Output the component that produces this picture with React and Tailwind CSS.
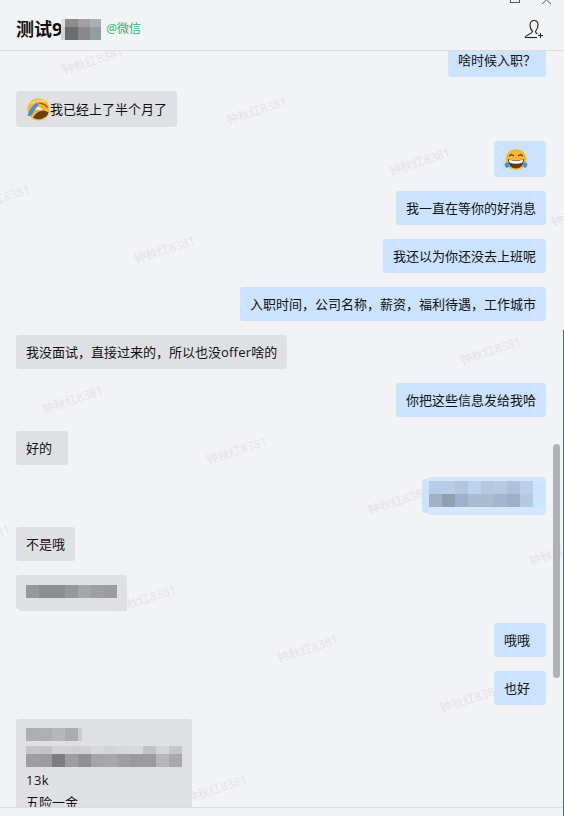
import React from 'react';

const marks = [
    'left-[61px] top-[52px]',
    'left-[225px] top-[102px]',
    'left-[388px] top-[153px]',
    'left-[-32px] top-[190px]',
    'left-[133px] top-[241px]',
    'left-[550px] top-[204px]',
    'left-[296px] top-[291px]',
    'left-[459px] top-[342px]',
    'left-[41px] top-[391px]',
    'left-[205px] top-[442px]',
    'left-[367px] top-[492px]',
    'left-[528px] top-[543px]',
    'left-[-52px] top-[530px]',
    'left-[114px] top-[590px]',
    'left-[276px] top-[640px]',
    'left-[439px] top-[690px]',
    'left-[185px] top-[780px]',
];

// pixelated patches over private text; widths/heights are per column/row
function Mosaic({ rows, widths, heights, className = '' }) {
    const xs = widths.map((_, i) => widths.slice(0, i).reduce((a, b) => a + b, 0));
    const ys = heights.map((_, i) => heights.slice(0, i).reduce((a, b) => a + b, 0));
    return (
        <svg
            width={widths.reduce((a, b) => a + b, 0)}
            height={heights.reduce((a, b) => a + b, 0)}
            className={`block shrink-0 ${className}`}
        >
            {rows.map((row, y) =>
                row.map((c, x) => (
                    <rect key={x + '-' + y} x={xs[x]} y={ys[y]} width={widths[x]} height={heights[y]} fill={c} />
                ))
            )}
        </svg>
    );
}

function CryEmoji() {
    return (
        <svg width="23" height="23" viewBox="0 0 23 23" className="shrink-0">
            <circle cx="11.5" cy="11.5" r="11" fill="#f7b52f" />
            <path d="M4 6 Q10 0.5 18 3.5" stroke="#ffdc80" strokeWidth="1.4" fill="none" />
            <path d="M12 5.5 Q17 5 20.5 9.5" stroke="#8a5a18" strokeWidth="1.3" fill="none" />
            <path d="M6 19.5 Q13 9 21.5 14.5 Q20.5 19 14 21 Q9 22 6 19.5 Z" fill="#6b3d12" />
            <path d="M10 8 Q13 10 16 11 L13 12.5 Q11 11 9 12 Z" fill="#fff3d0" />
            <path d="M10.5 4.5 Q3.5 8 0.5 17.5 Q4 19.5 6 15 Q8 10 11.5 7.5 Z" fill="#3d8fe8" />
        </svg>
    );
}

function LaughEmoji() {
    return (
        <svg width="24" height="23" viewBox="0 0 24 23" className="block">
            <circle cx="12" cy="11.5" r="10.5" fill="#f7b733" />
            <path d="M5 8 Q7.5 5.5 10 8" stroke="#6b4210" strokeWidth="1.4" fill="none" />
            <path d="M14 8 Q16.5 5.5 19 8" stroke="#6b4210" strokeWidth="1.4" fill="none" />
            <path d="M4 11 Q12 14 20 11 Q20 20 12 20.5 Q4 20 4 11 Z" fill="#6b3410" />
            <path d="M5 11.5 Q12 14.5 19 11.5 L18.6 14.5 Q12 17 5.4 14.5 Z" fill="#fff" />
            <path d="M1 15 Q0 19 3 20 Q6 19 5 14 Z" fill="#3f96e8" />
            <path d="M23 15 Q24 19 21 20 Q18 19 19 14 Z" fill="#3f96e8" />
        </svg>
    );
}

function Bubble({ mine, className = 'px-[10px] py-[7px]', children }) {
    return (
        <div className={`flex ${mine ? 'justify-end' : 'justify-start'}`}>
            <div className={`relative min-w-[52px] rounded-[3px] text-[13px] leading-[20px] text-[#111] ${mine ? 'bg-[#cbe3fd]' : 'bg-[#dfe0e4]'} ${className}`}>
                {children}
            </div>
        </div>
    );
}

const nameBlur = [
    ['#e0e0e2', '#8c8c8c', '#a0a0a2', '#acb0b6'],
    ['#d4d4d6', '#6c6c6c', '#888888', '#949ca6'],
];
const mineBlur = [
    ['#b6cde6', '#b6cde6', '#b0c6df', '#bcd3ec', '#b2c8e0', '#b5cbe3', '#adc2da', '#b9d0ea', '#cce4fd'],
    ['#9fb2c6', '#8fa1b1', '#9db2c8', '#a8bcd2', '#a8bdd3', '#a3b6cd', '#9eb0c7', '#b3cae3', '#cce4fd'],
];
const plainBlur = [['#98989b', '#8e8e91', '#8e8e91', '#98989b', '#a6a6a8', '#9f9fa2', '#9c9c9f']];
const cardTop = [['#aeaeb0', '#b0b0b2', '#b7b7ba', '#acacae', '#c4ccd8']];
const cardMid = [
    ['#c6c6c9', '#c4c4c7', '#d3d3d6', '#cfcfd2', '#cfd0d2', '#d7d7da', '#d2d4d6', '#d6d6d9', '#d8d8db', '#c2c2c5', '#d5d5d8', '#c6c6c9'],
    ['#9e9ea1', '#9c9c9f', '#7c7c7e', '#9d9d9f', '#919193', '#a5a5a7', '#a6a8aa', '#a0a0a3', '#9a9a9c', '#9b9b9d', '#b6b6b9', '#a9a9ac'],
];
const cell13 = (n) => Array(n).fill(13);

export default function App() {
    return (
        <div className="relative flex h-[816px] w-[564px] flex-col overflow-hidden bg-[#f2f3f5] font-['Open_Sans','Noto_Sans_CJK_SC',sans-serif]">
            <div className="relative flex h-[51px] shrink-0 items-center justify-between border-b border-[#dcdcde] bg-[#f2f3f5] pl-[16px] pr-[20px] pt-[8px]">
                <div className="flex items-center">
                    <span className="text-[18px] font-bold leading-[24px] text-[#111]">测试9</span>
                    <Mosaic rows={nameBlur} widths={[4, 13, 12, 11]} heights={[8, 13]} className="ml-[-1px]" />
                    <span className="ml-[5px] text-[12px] text-[#35b56f]">@微信</span>
                </div>
                <svg width="20" height="20" viewBox="0 0 20 20" fill="none" stroke="#222" strokeWidth="1.1">
                    <path d="M1 18.5 C1.5 15.5 8 15.5 8.5 12.5 C6.5 10.5 6 8 6 6 C6 3 8 1.5 10 1.5 C12 1.5 14 3 14 6 C14 8 13.5 10 11.5 12.5 C11.5 13.5 12.5 14.5 13.5 15" />
                    <path d="M1 18.5 H13" />
                    <path d="M14 16.5 H19 M16.5 14 V19" />
                </svg>
                <div className="absolute right-[44px] top-[-6px] h-[9px] w-[10px] border border-[#555]" />
                <svg width="11" height="6" viewBox="0 0 11 6" fill="none" stroke="#555" className="absolute right-[12px] top-0">
                    <path d="M1 4 L5.5 0 L10 4" />
                </svg>
            </div>

            <div className="relative flex-1 overflow-hidden">
                {marks.map((m) => (
                    <span
                        key={m}
                        className={`pointer-events-none absolute mt-[-51px] -rotate-[18deg] whitespace-nowrap text-[12px] text-[#e3e4e7] ${m}`}
                    >
                        钟秋红8381
                    </span>
                ))}
                <div className="relative mt-[-8px] flex flex-col gap-[14px] pl-[16px] pr-[18px]">
                    <Bubble mine className="w-[98px] px-[10px] py-[7px]">{'啥时候入职\uFF1F'}</Bubble>
                    <Bubble className="flex h-[36px] items-center pl-[11px] pr-[10px]">
                        <CryEmoji />
                        <span>我已经上了半个月了</span>
                    </Bubble>
                    <Bubble mine className="flex h-[36px] w-[52px] items-center pl-[10px]">
                        <LaughEmoji />
                    </Bubble>
                    <Bubble mine>我一直在等你的好消息</Bubble>
                    <Bubble mine>我还以为你还没去上班呢</Bubble>
                    <Bubble mine>{'入职时间\uFF0C公司名称\uFF0C薪资\uFF0C福利待遇\uFF0C工作城市'}</Bubble>
                    <Bubble>
                        {'我没面试\uFF0C直接过来的\uFF0C所以也没'}
                        <span className="tracking-[0.2px]">offer</span>
                        啥的
                    </Bubble>
                    <Bubble mine>你把这些信息发给我哈</Bubble>
                    <Bubble>好的</Bubble>
                    <Bubble mine className="h-[34px] w-[124px]">
                        <div className="absolute left-[7px] top-[-2px] h-[38px] w-[117px] bg-[#d6e7fb] pt-[4px]">
                            <Mosaic rows={mineBlur} widths={cell13(9)} heights={[13, 13]} />
                        </div>
                    </Bubble>
                    <Bubble>不是哦</Bubble>
                    <Bubble className="h-[34px] w-[111px] px-[10px] py-[10px]">
                        <Mosaic rows={plainBlur} widths={cell13(7)} heights={[13]} />
                        <div className="absolute bottom-[-2px] left-[3px] h-[4px] w-[108px] bg-[#dfe0e4]" />
                    </Bubble>
                    <Bubble mine>哦哦</Bubble>
                    <Bubble mine>也好</Bubble>
                    <Bubble className="w-[176px] px-[10px] pt-[9px] pb-[7px]">
                        <Mosaic rows={cardTop} widths={[13, 13, 13, 13, 4]} heights={[13]} />
                        <div className="mt-[5px]">
                            <Mosaic rows={cardMid} widths={cell13(12)} heights={[8, 13]} />
                        </div>
                        <div className="mt-[2px] leading-[22px] tracking-[0.5px]">13k</div>
                        <div className="leading-[22px]">五险一金</div>
                    </Bubble>
                </div>
            </div>

            <div className="relative h-[9px] shrink-0 border-t border-[#dcdcde] bg-[#f2f3f5]" />

            <div className="absolute right-[4px] top-[444px] h-[234px] w-[7px] rounded-full bg-[#b0b1b4]" />
            <div className="absolute right-0 top-[330px] bottom-0 w-px bg-[#3a6ea5]" />
        </div>
    );
}
